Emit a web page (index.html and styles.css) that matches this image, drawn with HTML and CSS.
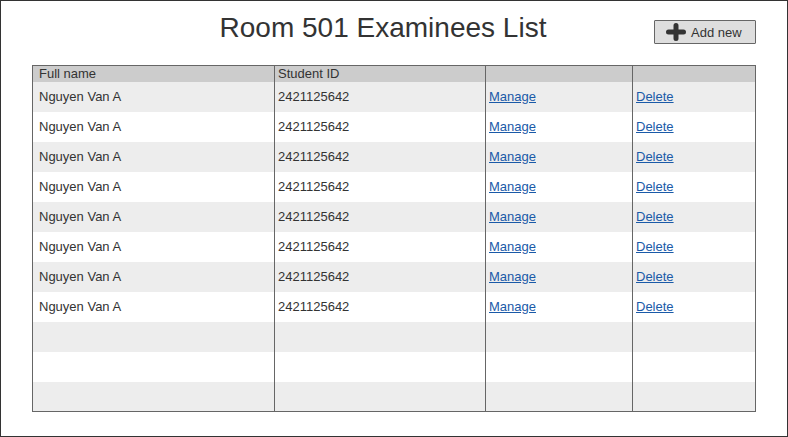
FILE: index.html
```html
<!DOCTYPE html>
<html>
<head>
<meta charset="utf-8">
<link rel="stylesheet" href="styles.css">
</head>
<body>
<div class="frame">
  <div class="header">
    <h1 class="title">Room 501 Examinees List</h1>
    <button class="add-btn">
      <svg class="plus" width="20" height="18" viewBox="0 0 20 18"><path d="M10 2.5V15.5M2.5 9H17.5" stroke="#333" stroke-width="5" stroke-linecap="round" fill="none"/></svg>
      <span>Add new</span>
    </button>
  </div>
  <div class="table">
    <div class="row head"><div class="cell">Full name</div><div class="cell">Student ID</div><div class="cell"></div><div class="cell"></div></div>
    <div class="row"><div class="cell">Nguyen Van A</div><div class="cell">2421125642</div><div class="cell"><a href="#">Manage</a></div><div class="cell"><a href="#">Delete</a></div></div>
    <div class="row"><div class="cell">Nguyen Van A</div><div class="cell">2421125642</div><div class="cell"><a href="#">Manage</a></div><div class="cell"><a href="#">Delete</a></div></div>
    <div class="row"><div class="cell">Nguyen Van A</div><div class="cell">2421125642</div><div class="cell"><a href="#">Manage</a></div><div class="cell"><a href="#">Delete</a></div></div>
    <div class="row"><div class="cell">Nguyen Van A</div><div class="cell">2421125642</div><div class="cell"><a href="#">Manage</a></div><div class="cell"><a href="#">Delete</a></div></div>
    <div class="row"><div class="cell">Nguyen Van A</div><div class="cell">2421125642</div><div class="cell"><a href="#">Manage</a></div><div class="cell"><a href="#">Delete</a></div></div>
    <div class="row"><div class="cell">Nguyen Van A</div><div class="cell">2421125642</div><div class="cell"><a href="#">Manage</a></div><div class="cell"><a href="#">Delete</a></div></div>
    <div class="row"><div class="cell">Nguyen Van A</div><div class="cell">2421125642</div><div class="cell"><a href="#">Manage</a></div><div class="cell"><a href="#">Delete</a></div></div>
    <div class="row"><div class="cell">Nguyen Van A</div><div class="cell">2421125642</div><div class="cell"><a href="#">Manage</a></div><div class="cell"><a href="#">Delete</a></div></div>
    <div class="row"><div class="cell"></div><div class="cell"></div><div class="cell"></div><div class="cell"></div></div>
    <div class="row"><div class="cell"></div><div class="cell"></div><div class="cell"></div><div class="cell"></div></div>
    <div class="row last"><div class="cell"></div><div class="cell"></div><div class="cell"></div><div class="cell"></div></div>
  </div>
</div>
</body>
</html>
```
FILE: styles.css
```css
html, body {
  margin: 0;
  padding: 0;
  background: #fff;
}
body {
  font-family: "Liberation Sans", Arial, sans-serif;
  color: #333;
}
.frame {
  width: 788px;
  height: 437px;
  box-sizing: border-box;
  border: 1px solid #333;
  padding: 0 31px;
}
.header {
  display: flex;
  align-items: flex-start;
  height: 64px;
}
.title {
  flex: 1;
  margin: 11px 0 0;
  padding-left: 80px;
  text-align: center;
  font-size: 28px;
  font-weight: normal;
  line-height: 32px;
  color: #333;
}
.add-btn {
  margin-top: 19px;
  width: 102px;
  height: 24px;
  box-sizing: border-box;
  border: 1px solid #666;
  border-radius: 1px;
  background: #dedede;
  display: flex;
  align-items: center;
  gap: 5px;
  padding: 0 0 0 11px;
  font-family: "Liberation Sans", Arial, sans-serif;
  font-size: 13px;
  color: #333;
}
.plus {
  display: block;
  flex: none;
}
.table {
  width: 724px;
  box-sizing: border-box;
  border: 1px solid #666;
}
.row {
  display: grid;
  grid-template-columns: 242px 211px 147px 122px;
  height: 30px;
  font-size: 13px;
  line-height: 30px;
}
.row:nth-child(even) {
  background: #ededed;
}
.row.head {
  height: 16px;
  line-height: 16px;
  background: #cccccc;
}
.row.last {
  height: 29px;
}
.cell {
  border-right: 1px solid #666;
  padding-left: 3px;
  white-space: nowrap;
  overflow: hidden;
}
.cell:first-child {
  padding-left: 6px;
}
.cell:last-child {
  border-right: none;
}
.cell a {
  color: #1a5aa8;
  text-decoration: underline;
}
```
